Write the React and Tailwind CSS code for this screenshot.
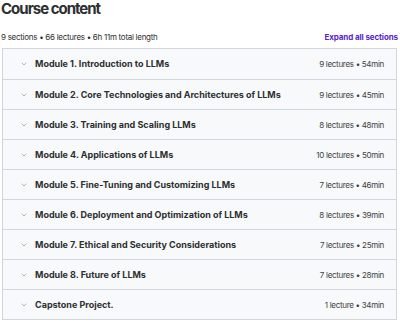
import { ChevronDown } from 'lucide-react'

const sections = [
  { title: 'Module 1. Introduction to LLMs', meta: '9 lectures • 54min' },
  { title: 'Module 2. Core Technologies and Architectures of LLMs', meta: '9 lectures • 45min' },
  { title: 'Module 3. Training and Scaling LLMs', meta: '8 lectures • 48min' },
  { title: 'Module 4. Applications of LLMs', meta: '10 lectures • 50min' },
  { title: 'Module 5. Fine-Tuning and Customizing LLMs', meta: '7 lectures • 46min' },
  { title: 'Module 6. Deployment and Optimization of LLMs', meta: '8 lectures • 39min' },
  { title: 'Module 7. Ethical and Security Considerations', meta: '7 lectures • 25min' },
  { title: 'Module 8. Future of LLMs', meta: '7 lectures • 28min' },
  { title: 'Capstone Project.', meta: '1 lecture • 34min' },
]

export default function App() {
  return (
    <div className="w-[400px] h-[323px] bg-white px-[2px] font-['Inter',sans-serif] text-[#2d2f31] overflow-hidden">
      <h2 className="text-[15px] leading-[18px] font-bold tracking-[-1px] -ml-[1px]">Course content</h2>
      <div className="flex items-end justify-between mt-[13px] h-[12px]">
        <span className="text-[8px] leading-[12px] tracking-[-0.28px] -ml-[1px]">9 sections • 66 lectures • 6h 11m total length</span>
        <button className="text-[8px] leading-[12px] font-bold tracking-[-0.1px] text-[#5624d0]">Expand all sections</button>
      </div>
      <div className="mt-[5px] border border-[#d1d7dc] w-[395px]">
        {sections.map((s, i) => (
          <div
            key={i}
            className={`flex items-center justify-between h-[30px] bg-[#f7f9fa] pl-[17px] pr-[12px] ${i > 0 ? 'border-t border-[#d1d7dc]' : ''}`}
          >
            <div className="flex items-center gap-[7px]">
              <ChevronDown size={8} strokeWidth={1.5} className="text-[#6a6f73]" />
              <span className="text-[9px] font-bold">{s.title}</span>
            </div>
            <span className="text-[8px] tracking-[-0.3px] text-[#3e4143]">{s.meta}</span>
          </div>
        ))}
      </div>
    </div>
  )
}
